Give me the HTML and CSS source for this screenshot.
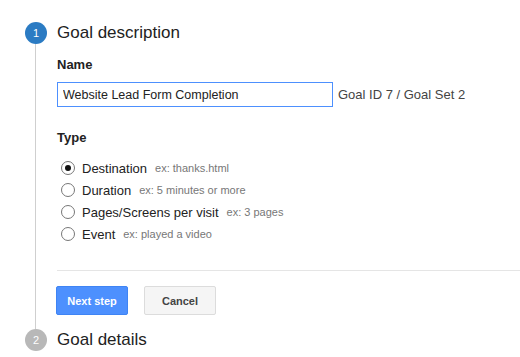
FILE: index.html
```html
<!DOCTYPE html>
<html lang="en">
<head>
    <meta charset="UTF-8">
    <title>Goal setup</title>
    <link rel="stylesheet" href="styles.css">
</head>
<body>
    <div class="wizard">
        <div class="step">
            <div class="rail">
                <div class="num active">1</div>
                <div class="line"></div>
            </div>
            <div class="body">
                <h2 class="title">Goal description</h2>
                <div class="label">Name</div>
                <div class="name-row">
                    <input class="name-input" type="text" value="Website Lead Form Completion">
                    <span class="goal-id">Goal ID 7 / Goal Set 2</span>
                </div>
                <div class="label type-label">Type</div>
                <ul class="types">
                    <li><span class="radio checked"></span>Destination <span class="hint">ex: thanks.html</span></li>
                    <li><span class="radio"></span>Duration <span class="hint">ex: 5 minutes or more</span></li>
                    <li><span class="radio"></span>Pages/Screens per visit <span class="hint">ex: 3 pages</span></li>
                    <li><span class="radio"></span>Event <span class="hint">ex: played a video</span></li>
                </ul>
                <div class="divider"></div>
                <div class="buttons">
                    <button class="btn btn-blue">Next step</button>
                    <button class="btn btn-grey">Cancel</button>
                </div>
            </div>
        </div>
        <div class="step">
            <div class="rail">
                <div class="num">2</div>
            </div>
            <div class="body">
                <h2 class="title">Goal details</h2>
            </div>
        </div>
    </div>
</body>
</html>
```

FILE: styles.css
```css
body{
    margin: 0;
    background: #fff;
    font-family: "Liberation Sans", Arial, sans-serif;
    color: #222;
}
.wizard{
    padding-top: 22px;
}
.step{
    display: grid;
    grid-template-columns: 57px 1fr;
}
.rail{
    display: flex;
    flex-direction: column;
    margin-left: 25px;
    width: 22px;
}
.num{
    width: 22px;
    height: 22px;
    border-radius: 50%;
    background: #b8b8b8;
    color: #fff;
    font-size: 11px;
    line-height: 22px;
    text-align: center;
}
.num.active{
    background: #2b7bc3;
}
.line{
    flex: 1;
    width: 1px;
    margin-left: 10px;
    background: #cfcfcf;
}
.body{
    padding-bottom: 14px;
}
.title{
    margin: 0;
    font-size: 17px;
    line-height: 22px;
    font-weight: normal;
    color: #222;
}
.label{
    margin-top: 13px;
    font-size: 13px;
    line-height: 16px;
    font-weight: bold;
    color: #222;
}
.type-label{
    margin-top: 23px;
}
.name-row{
    display: flex;
    align-items: center;
    margin-top: 9px;
}
.name-input{
    box-sizing: border-box;
    width: 276px;
    height: 25px;
    margin: 0;
    padding: 0 5px;
    border: 1px solid #4d90fe;
    outline: none;
    font-family: inherit;
    font-size: 12.5px;
    color: #222;
}
.goal-id{
    margin-left: 5px;
    font-size: 13px;
    color: #444;
}
.types{
    list-style: none;
    margin: 11px 0 0;
    padding: 0;
}
.types li{
    display: flex;
    align-items: center;
    height: 22px;
    font-size: 13px;
    color: #222;
}
.radio{
    box-sizing: border-box;
    width: 14px;
    height: 14px;
    margin: 0 7px 0 4px;
    border: 1px solid #777;
    border-radius: 50%;
    background: #fff;
    display: flex;
    align-items: center;
    justify-content: center;
}
.radio.checked:after{
    content: "";
    width: 6px;
    height: 6px;
    border-radius: 50%;
    background: #111;
}
.hint{
    margin-left: 8px;
    font-size: 11px;
    color: #777;
}
.divider{
    margin-top: 25px;
    height: 1px;
    background: #e5e5e5;
}
.buttons{
    display: flex;
    gap: 16px;
    margin: 15px 0 0 -1px;
}
.btn{
    box-sizing: border-box;
    width: 72px;
    height: 29px;
    border-radius: 2px;
    font-family: inherit;
    font-size: 11px;
    font-weight: bold;
    padding: 0;
}
.btn-blue{
    background: #4d90fe;
    border: 1px solid #3f84f4;
    color: #fff;
}
.btn-grey{
    background: #f5f5f5;
    border: 1px solid #dcdcdc;
    color: #444;
}
```
